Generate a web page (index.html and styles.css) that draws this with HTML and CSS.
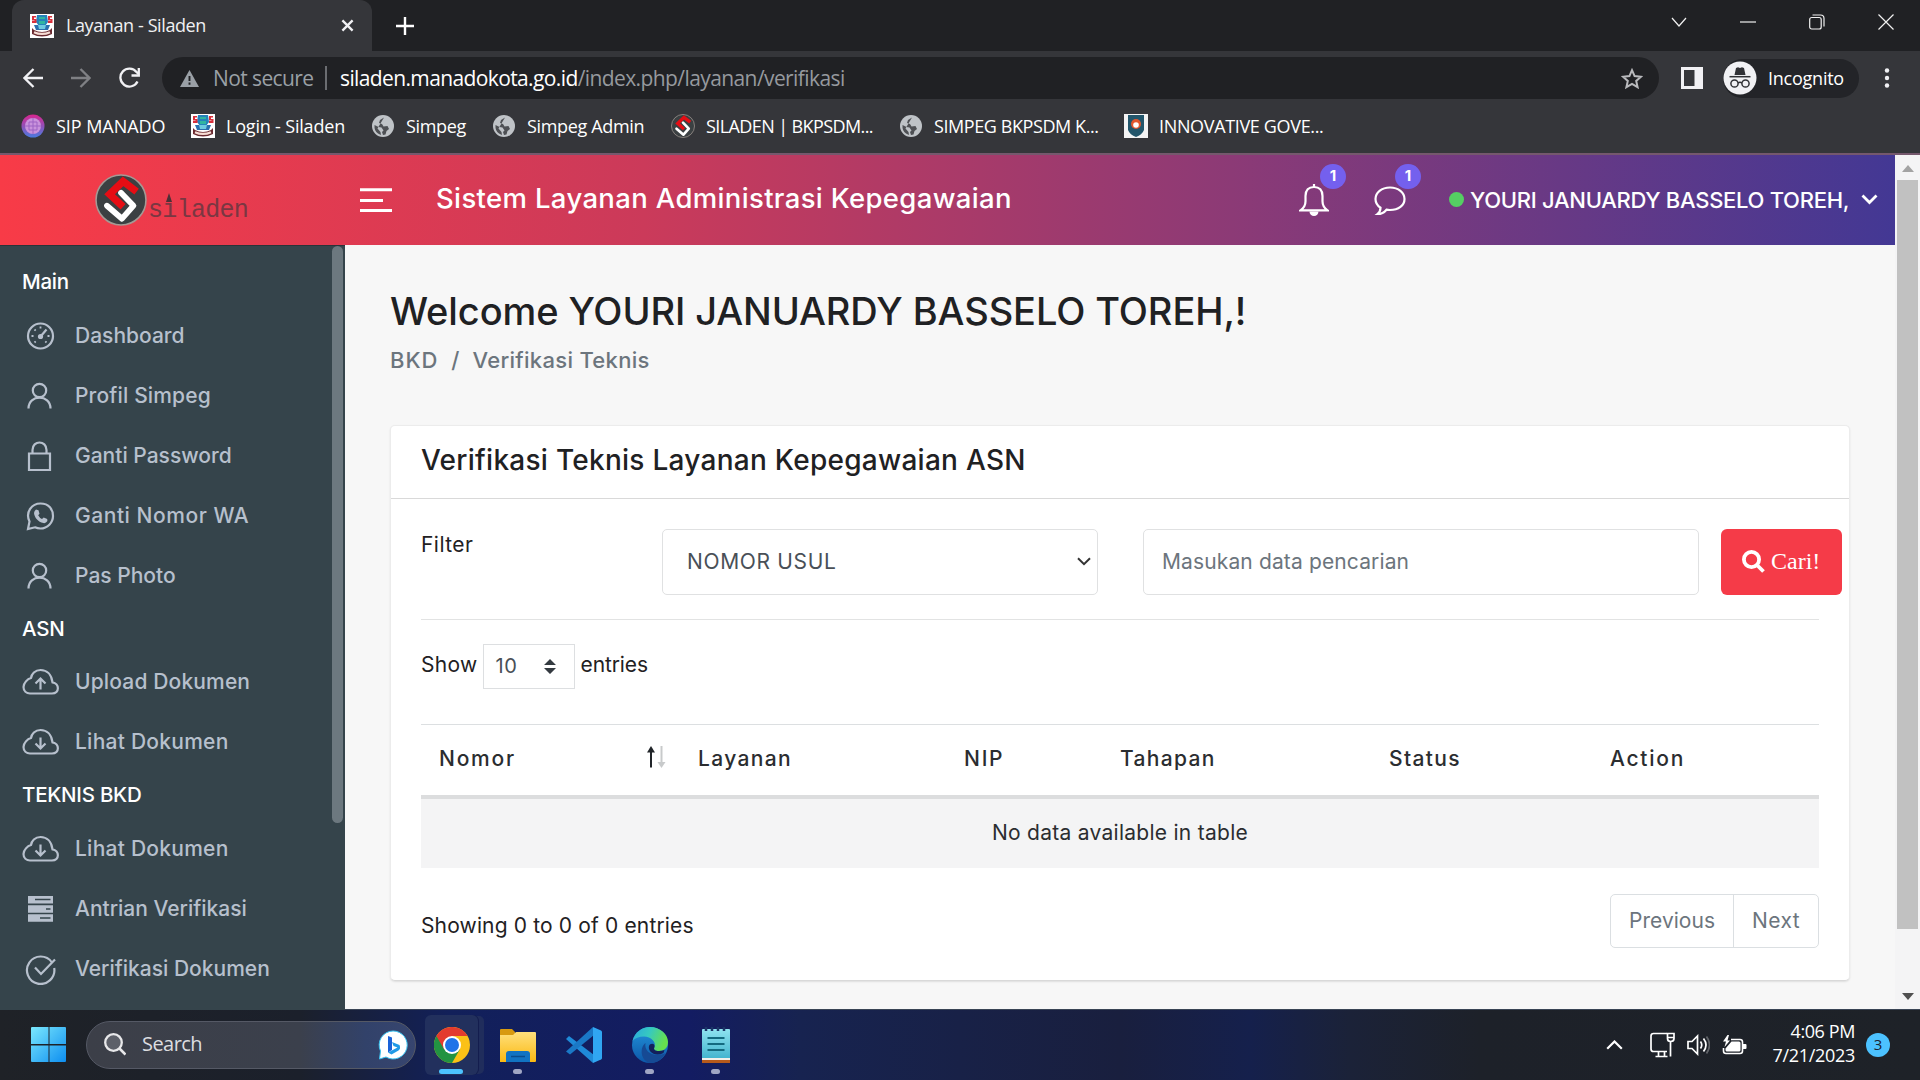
FILE: index.html
```html
<!DOCTYPE html>
<html lang="id">
<head>
<meta charset="utf-8">
<title>Layanan - Siladen</title>
<link rel="stylesheet" href="styles.css">
</head>
<body>
<svg class="defs" width="0" height="0" aria-hidden="true">
  <defs>
    <linearGradient id="win" x1="0" y1="0" x2="1" y2="1"><stop offset="0" stop-color="#7be8fd"/><stop offset="1" stop-color="#0d8ef0"/></linearGradient>
    <linearGradient id="fold" x1="0" y1="0" x2="0" y2="1"><stop offset="0" stop-color="#ffe07c"/><stop offset="1" stop-color="#fbb912"/></linearGradient>
    <linearGradient id="edgeTop" x1="0" y1="0" x2="1" y2=".3"><stop offset="0" stop-color="#2aa7dd"/><stop offset=".5" stop-color="#36c9c0"/><stop offset="1" stop-color="#66e04e"/></linearGradient>
    <linearGradient id="edgeLow" x1="0" y1="0" x2="0" y2="1"><stop offset="0" stop-color="#2395dc"/><stop offset="1" stop-color="#0d57a8"/></linearGradient>
    <linearGradient id="note" x1="0" y1="0" x2="0" y2="1"><stop offset="0" stop-color="#8fe3f0"/><stop offset="1" stop-color="#3fb2cd"/></linearGradient>
    <linearGradient id="sip" x1="0" y1="0" x2="0" y2="1"><stop offset="0" stop-color="#d9258f"/><stop offset="1" stop-color="#4a7be0"/></linearGradient>
    <symbol id="i-manado" viewBox="0 0 24 24"><rect width="24" height="24" fill="#fff"/><path d="M7 1h10l1 7-3 4H9L6 8z" fill="#2583bb"/><path d="M2 2h4v1.500H4V5h2.500v4H2V7h2.500V6.500H2zM18 2h4v1.500h-2V5h2.500v4H18V7h2.500V6.500H18z" fill="#d8303c"/><path d="M9 3h6v2H9zM9 7h6v3H9z" fill="#31b6a0"/><path d="M4 11h16l-2 5H6z" fill="#2a6fae"/><path d="M8 11h8l-1 4H9z" fill="#6fcbe0"/><path d="M2 14l2 2q8 4 16 0l2-2v6q-10 5-20 0z" fill="#6b2a30"/><path d="M4 18.200q8 3.500 16 0" fill="none" stroke="#f6dcd4" stroke-width="2.200"/></symbol>
    <symbol id="i-globe" viewBox="0 0 24 24"><circle cx="12" cy="12" r="11" fill="#bfc3c7"/><path d="M13 3.500l-4 2.500-1 3 3 1 1.500 2.500 4-.5 1.500 3-2.500 2-1 3.500-2.500.5-1-3 1.500-1.500-2-3-3-.5-4-2q-.5 6 3.500 8.500l3 1.500-.5-3-3-3.500" fill="#3a3c40" opacity=".85"/></symbol>
    <symbol id="i-mark" viewBox="0 0 50 50"><circle cx="25" cy="25" r="24" fill="#3b4042" stroke="#a49a95" stroke-width="1.500"/><path d="M40 17L27 7 14 19.500l13 12" fill="none" stroke="#e60d14" stroke-width="7"/><path d="M25 18l12 12.500L26 43 11.500 30.500" fill="none" stroke="#fff" stroke-width="5.500" stroke-linecap="round" stroke-linejoin="round"/></symbol>
    <symbol id="i-user" viewBox="0 0 28 28"><circle cx="12.500" cy="8.500" r="6.700"/><path d="M1.500 26.500c0-14.500 22-14.500 22 0"/></symbol>
    <symbol id="i-cloud" viewBox="0 0 38 28"><path d="M8 25.500h22c8 0 7.500-10 .5-11.200C29.500 6.500 25 2 18.500 2 13 2 9.500 6 9 10 5.500 11 1.500 15 1.500 19s3 6.500 6.500 6.500z"/></symbol>
  </defs>
</svg>

<div class="tabstrip">
  <div class="tab">
    <svg class="fav"><use href="#i-manado"/></svg>
    <span class="tab-title">Layanan - Siladen</span>
    <svg class="tab-x" width="13" height="13" viewBox="0 0 14 14"><path d="M1.500 1.500l11 11m0-11l-11 11"/></svg>
  </div>
  <svg class="newtab" width="18" height="18" viewBox="0 0 18 18"><path d="M9 0v18M0 9h18"/></svg>
  <div class="wincontrols">
    <svg width="16" height="16" viewBox="0 0 16 16"><path d="M1 4l7 8 7-8"/></svg>
    <svg width="16" height="16" viewBox="0 0 16 16"><path d="M0 8h16"/></svg>
    <svg width="16" height="16" viewBox="0 0 16 16"><rect x=".7" y="3.500" width="11.500" height="11.500" rx="2"/><path d="M3.500 1h8q3.500 0 3.500 3.500v8"/></svg>
    <svg width="16" height="16" viewBox="0 0 16 16"><path d="M.5.5l15 15m0-15l-15 15"/></svg>
  </div>
</div>

<div class="toolbar">
  <div class="navs">
    <svg width="20" height="20" viewBox="0 0 20 20"><path d="M20 10H2M10.500 1L1.500 10l9 9"/></svg>
    <svg class="dim" width="20" height="20" viewBox="0 0 20 20"><path d="M0 10h18M9.500 1l9 9-9 9"/></svg>
    <svg width="22" height="22" viewBox="0 0 22 22"><path d="M18.500 14.500A9 9 0 1 1 17.500 5l1.500 1.500M19.800 1v7.500H12.500"/></svg>
  </div>
  <div class="omnibox">
    <svg width="19" height="17" viewBox="0 0 19 17"><path d="M9.500 0L19 17H0z" fill="#9aa0a6"/><path d="M9.500 6v5m0 1.500v2.300" stroke="#202124" stroke-width="1.900"/></svg>
    <span class="insecure">Not secure</span>
    <span class="bar"></span>
    <span class="host">siladen.manadokota.go.id</span><span class="path">/index.php/layanan/verifikasi</span>
    <svg class="star" width="22" height="21" viewBox="0 0 22 21"><path d="M11 2.200l2.600 5.900 6.400.6-4.800 4.200 1.400 6.300L11 15.900l-5.600 3.300 1.400-6.300L2 8.700l6.400-.6z"/></svg>
  </div>
  <svg class="panel" width="22" height="22" viewBox="0 0 22 22"><path d="M0 0h22v22H0zM3 3v16h10.500V3z" fill="#f1f1f4" fill-rule="evenodd"/></svg>
  <div class="incog">
    <svg width="34" height="34" viewBox="0 0 34 34"><circle cx="17" cy="17" r="16.500" fill="#f1f1f4"/><path d="M11.500 14l1.500-7 2-.7 2 .7 2-.7 2 .7 1.500 7z" fill="#303135"/><path d="M6.500 15.700h21" stroke="#303135" stroke-width="1.500"/><g fill="none" stroke="#303135" stroke-width="1.500"><circle cx="11.500" cy="22.500" r="3.600"/><circle cx="22.500" cy="22.500" r="3.600"/><path d="M15 22q2-1.500 4 0"/></g></svg>
    <span>Incognito</span>
  </div>
  <svg class="dots" width="6" height="20" viewBox="0 0 6 20"><circle cx="3" cy="2.500" r="2.200"/><circle cx="3" cy="10" r="2.200"/><circle cx="3" cy="17.500" r="2.200"/></svg>
</div>

<div class="bookmarks">
  <div class="bm"><svg viewBox="0 0 24 24"><circle cx="12" cy="12" r="11.500" fill="url(#sip)"/><circle cx="12" cy="12" r="8" fill="#c992dc"/><path d="M8 8h8v8H8zM12 4v16M4 12h16" fill="none" stroke="#9d62c4"/></svg><span class="n1">SIP MANADO</span></div>
  <div class="bm"><svg><use href="#i-manado"/></svg><span class="n2">Login - Siladen</span></div>
  <div class="bm"><svg><use href="#i-globe"/></svg><span class="n3">Simpeg</span></div>
  <div class="bm"><svg><use href="#i-globe"/></svg><span class="n3">Simpeg Admin</span></div>
  <div class="bm"><svg><use href="#i-mark"/></svg><span class="n4">SILADEN | BKPSDM...</span></div>
  <div class="bm"><svg><use href="#i-globe"/></svg><span class="n5">SIMPEG BKPSDM K...</span></div>
  <div class="bm"><svg viewBox="0 0 24 24"><rect width="24" height="24" fill="#f4f4f4"/><path d="M4 1h16v15q-2 5-8 7-6-2-8-7z" fill="#23566b"/><circle cx="12" cy="10" r="5" fill="#e2572e"/><circle cx="12" cy="11" r="2.800" fill="#fff"/></svg><span class="n3">INNOVATIVE GOVE...</span></div>
</div>

<div class="viewport">
  <div class="app">
    <header class="topbar">
      <div class="logo"><svg width="52" height="52"><use href="#i-mark"/></svg><span class="logo-text">s<span class="logo-i">ı</span>laden</span></div>
      <svg class="burger" width="32" height="24" viewBox="0 0 32 24"><path d="M0 1.800h32M0 12.500h23M0 22.500h32"/></svg>
      <h1>Sistem Layanan Administrasi Kepegawaian</h1>
      <div class="bell">
        <svg width="30" height="32" viewBox="0 0 30 32"><path d="M1.500 26.300h27q-5-3.300-5-9V12C23.500 6 20.500 3 15 3S6.500 6 6.500 12v5.300q0 5.700-5 9z"/><path d="M15 0v3"/><path d="M10.500 27.500a4.500 4.500 0 0 0 9 0z" fill="#fff" stroke="none"/></svg>
        <span class="badge">1</span>
      </div>
      <div class="chat">
        <svg width="32" height="32" viewBox="0 0 32 32"><path d="M16 3.500c8.500 0 14.500 5 14.500 11.500S24.500 26 16 26q-2 0-3.500-.3Q9 30 3.500 30q3-2.500 3-6.300Q1.500 20.500 1.500 15C1.500 8.500 7.500 3.500 16 3.500z"/></svg>
        <span class="badge">1</span>
      </div>
      <div class="account"><i class="online"></i><span>YOURI JANUARDY BASSELO TOREH,</span><svg width="17" height="11" viewBox="0 0 17 11"><path d="M1.500 1.500l7 7 7-7"/></svg></div>
    </header>
    <div class="cols">
      <nav class="sidebar">
        <h2>Main</h2>
        <a><svg width="38" height="30" viewBox="-5 0 38 30"><circle cx="13.500" cy="15" r="12.500"/><circle cx="13.500" cy="15.500" r="2.600" fill="#b7c0cd" stroke="none"/><path d="M14 15l5.500-6.500"/><path d="M13.500 5.500v2M4.500 15h2M20.500 15h2M7.500 8.500l1.200 1.200M7.500 21.500l1.200-1.200M19.500 21.500l-1.200-1.200" stroke-width="1.800"/></svg><span class="t1">Dashboard</span></a>
        <a><svg width="38" height="28" viewBox="-5 0 38 28"><use href="#i-user" width="28" height="28"/></svg><span class="t3">Profil Simpeg</span></a>
        <a><svg width="38" height="30" viewBox="-5 0 38 30"><path d="M2 12.500h21V29H2zM5.500 12.500V9c0-10 14-10 14 0v3.500"/></svg><span class="t1">Ganti Password</span></a>
        <a><svg width="38" height="30" viewBox="-5 0 38 30"><path d="M1 28l1.500-7.500C-2 11 5 2.500 13.500 2.500S26 8.500 26 15 20.500 27.500 13.500 27.500q-3 0-5.500-1.200z"/><path d="M9 8.500l2.500.8 1 3.400-1.300 1.600q1.300 2.600 3.800 3.800l1.700-1.500 3.500 1.500.2 2q-1.500 2.500-4 2C11 21 7.500 16.500 7 12q.3-2.500 2-3.500z" fill="#b7c0cd" stroke="none"/></svg><span class="t2">Ganti Nomor WA</span></a>
        <a><svg width="38" height="28" viewBox="-5 0 38 28"><use href="#i-user" width="28" height="28"/></svg><span>Pas Photo</span></a>
        <h2>ASN</h2>
        <a><svg width="38" height="28" viewBox="0 0 38 28"><use href="#i-cloud"/><path d="M18.500 21.500V11M13.500 15.500l5-5 5 5"/></svg><span class="t3">Upload Dokumen</span></a>
        <a><svg width="38" height="28" viewBox="0 0 38 28"><use href="#i-cloud"/><path d="M18.500 9.500V20M13.500 15.500l5 5 5-5"/></svg><span class="t4">Lihat Dokumen</span></a>
        <h2>TEKNIS BKD</h2>
        <a><svg width="38" height="28" viewBox="0 0 38 28"><use href="#i-cloud"/><path d="M18.500 9.500V20M13.500 15.500l5 5 5-5"/></svg><span class="t4">Lihat Dokumen</span></a>
        <a><svg width="38" height="26" viewBox="-5 0 38 26"><path d="M1 0h25v7.500H1zM1 9.200h25v7.500H1zM1 18.300h25v7.500H1z" fill="#b7c0cd" stroke="none"/><path d="M8 3.500h15.500M19 13h4.500M13 22h10.500" stroke="#35444b" stroke-width="1.700"/></svg><span>Antrian Verifikasi</span></a>
        <a><svg width="38" height="32" viewBox="-5 0 38 32"><path d="M25 9.500A13.700 13.700 0 1 0 27.200 15M8 14.500l6 6.500L28 6.500"/></svg><span>Verifikasi Dokumen</span></a>
        <div class="side-scroll"></div>
      </nav>
      <main>
        <h3>Welcome YOURI JANUARDY BASSELO TOREH,!</h3>
        <div class="crumbs"><span class="c1">BKD</span><span>/</span><span class="c2">Verifikasi Teknis</span></div>
        <section class="card">
          <h4>Verifikasi Teknis Layanan Kepegawaian ASN</h4>
          <div class="card-body">
            <div class="filter">
              <label>Filter</label>
              <div class="select"><span>NOMOR USUL</span><svg width="14" height="9" viewBox="0 0 14 9"><path d="M1 1.200l6 6 6-6"/></svg></div>
              <div class="input">Masukan data pencarian</div>
              <button class="search-btn"><svg width="23" height="23" viewBox="0 0 23 23"><circle cx="9.500" cy="9.500" r="7.600"/><path d="M15 15l6.500 6.500"/></svg><span>Cari!</span></button>
            </div>
            <div class="length"><span>Show</span><div class="len-select"><span>10</span><svg width="12" height="15" viewBox="0 0 12 15"><path d="M6 0l6 6H0zM6 15L0 9h12z"/></svg></div><span class="ent">entries</span></div>
            <div class="table">
              <div class="thead"><div class="wide">Nomor<svg width="20" height="22" viewBox="0 0 20 22"><path d="M5 21.500V4" stroke="#212529" stroke-width="2"/><path d="M5 0l4 6.500H1z" fill="#212529"/><path d="M15.500 0v17" stroke="#c8cacb" stroke-width="2"/><path d="M15.500 22l4-6h-8z" fill="#c8cacb"/></svg></div><div>Layanan</div><div class="wide">NIP</div><div>Tahapan</div><div>Status</div><div class="wide">Action</div></div>
              <div class="empty">No data available in table</div>
            </div>
            <div class="tfoot"><span>Showing 0 to 0 of 0 entries</span><div class="pager"><span>Previous</span><span class="nx">Next</span></div></div>
          </div>
        </section>
      </main>
    </div>
  </div>
  <div class="vscroll"><svg width="12" height="8" viewBox="0 0 12 8"><path d="M6 0l6 7H0z" fill="#a3a3a3"/></svg><div class="thumb"></div><svg class="down" width="12" height="8" viewBox="0 0 12 8"><path d="M6 7l6-7H0z" fill="#505050"/></svg></div>
</div>

<div class="taskbar">
  <svg class="start" width="36" height="36" viewBox="0 0 36 36"><path d="M1 0h16.500v17H0V1q0-1 1-1zM18.500 0H34q1 0 1 1v16H18.500zM0 18.500h17.500V35H1q-1 0-1-1zM18.500 18.500H35V34q0 1-1 1H18.500z" fill="url(#win)"/></svg>
  <div class="searchbox">
    <svg width="22" height="23" viewBox="0 0 22 23"><circle cx="9.500" cy="9.500" r="8.300" fill="#5d6069" stroke="#e8e8ea" stroke-width="2.300"/><path d="M15.500 15.500l6 6" stroke="#e8e8ea" stroke-width="2.600"/></svg>
    <span>Search</span>
    <svg class="bing" width="30" height="30" viewBox="0 0 30 30"><path d="M15 1a14 14 0 1 1-7 26l-6.500 2 1-8A14 14 0 0 1 15 1z" fill="#fff" stroke="#36c3f2" stroke-width="1"/><path d="M10 6l4 1.500V20l-4 2.500z" fill="#1a62d8"/><path d="M10 22.500l9.500-5-4-1.500-1.500-4 7.500 3q1.500 4-1 5.500l-7 4z" fill="#1f9ae6"/></svg>
  </div>
  <div class="tasks">
    <div class="task active"><svg viewBox="0 0 36 36"><circle cx="18" cy="18" r="18" fill="#fbc116"/><path d="M18 18L2.400 9A18 18 0 0 0 18 36L25.800 22.500z" fill="#229342"/><path d="M18 9h15.600A18 18 0 0 0 2.400 9l7.800 13.500z" fill="#e33b2e"/><circle cx="18" cy="18" r="9" fill="#fff"/><circle cx="18" cy="18" r="7" fill="#1f73e8"/></svg></div>
    <div class="task run"><svg viewBox="0 0 36 36"><path d="M0 3q0-1 1-1h11l3 3v6H0z" fill="#d89a10"/><path d="M0 8h13l3-3h19q1 0 1 1v28q0 1-1 1H0z" fill="url(#fold)"/><path d="M6 35V27q0-3 3-3h18q3 0 3 3v8z" fill="#1173c2"/><path d="M11 29.500h14" stroke="#0a4c8c" stroke-width="1.500"/></svg></div>
    <div class="task"><svg viewBox="0 0 36 36"><path d="M0 12l3-3L28 28l-1 8z" fill="#1f8ad8"/><path d="M0 24.500l4 3L28 8l-1-8z" fill="#1a78c6"/><path d="M27 0l8 3.500q1 .5 1 1.500v26q0 1-1 1.500L27 36z" fill="#30a6f2"/></svg></div>
    <div class="task run"><svg viewBox="0 0 36 36"><circle cx="18" cy="18" r="18" fill="url(#edgeLow)"/><path d="M0.500 14C3 5 10 0 18 0c10 0 18 7 18 15 0 6-4 9-9 9-4 0-6-1.500-4.500-4C24.500 15 19 9.500 12 9.500 7 9.500 3 11 .5 14z" fill="url(#edgeTop)"/><path d="M13.500 16c-1.500 7 4.500 12 11.500 12 4 0 6-.5 8.500-2C30 33 24 36 18 36 9 34 7 21 13.500 16z" fill="#164a94"/><path d="M22.500 20c-1.500 2.500.5 4 4.500 4q3 0 5.500-1l-1 3q-3 1.500-6 1.500c-6 0-9.500-4.500-8.500-8.500 1-3.500 6.500-3 5.500 1z" fill="#13205c"/></svg></div>
    <div class="task run"><svg viewBox="0 0 36 36"><path d="M4 3q0-1 1-1h26q1 0 1 1v30H4z" fill="url(#note)"/><path d="M4 31h28v2H4z" fill="#f1efe9"/><path d="M4 33h28v3H4z" fill="#b65a1b"/><path d="M9.500 11h17M9.500 17h17M9.500 23h17" stroke="#136a80" stroke-width="2"/><path d="M8 0v4m6-4v4m6-4v4m6-4v4" stroke="#1b3566" stroke-width="2.500"/></svg></div>
  </div>
  <div class="tray">
    <svg class="up" width="17" height="10" viewBox="0 0 17 10"><path d="M1.200 8.800l7.300-7.300 7.300 7.300"/></svg>
    <svg width="25" height="26" viewBox="0 0 25 26"><path d="M17 1.500H3.500q-2.500 0-2.500 2.500v13q0 2.500 2.500 2.500H17M5.500 24.500h12M8.500 20v4M14.500 20v4M20.500 9.500v15"/><path d="M17.500 1.500h6.500v5q0 3-3.300 3-3.200 0-3.200-3zM17.500 5.500H24"/></svg>
    <svg class="spk" width="23" height="22" viewBox="0 0 23 22"><path d="M1 7.500h4L10.500 2v18L5 14.500H1zM13.500 7.500q2.500 3.500 0 7M16.500 4.500q5 6.500 0 13"/><path d="M19.500 2.500q6 8.500 0 17" opacity=".3"/></svg>
    <svg class="bat" width="25" height="20" viewBox="0 0 25 20"><path d="M9 4.500h9q2.500 0 2.500 2.500v9q0 2.500-2.500 2.500H4q-2.500 0-2.500-2.500v-3" stroke-width="1.600"/><path d="M9.500 6.500h7.500q1.500 0 1.500 1.500v7q0 1.500-1.500 1.500H5q-1.500 0-1.500-1.500v-1.500zM21 9h2.500q1 0 1 1v3q0 1-1 1H21zM5.500 0L1 6.500h3L2.500 12 8 5.500H5.500L7 0z" fill="#fff" stroke="none"/></svg>
    <div class="clock"><div>4:06 PM</div><div class="date">7/21/2023</div></div>
    <span class="count">3</span>
  </div>
</div>
</body>
</html>
```
FILE: styles.css
```css
* { box-sizing: border-box; }
body { margin: 0; width: 1920px; height: 1080px; overflow: hidden; display: flex; flex-direction: column; font-family: "Inter", "Liberation Sans", sans-serif; font-size: 21px; color: #1f2123; background: #35363a; }
h1, h2, h3, h4 { margin: 0; font-weight: 500; white-space: nowrap; }
svg { display: block; flex: none; fill: none; }
span { white-space: nowrap; }
.defs { position: absolute; }

/* browser frame */
.tabstrip, .toolbar, .bookmarks, .taskbar { font-family: "Open Sans", "Noto Sans", sans-serif; color: #fff; font-size: 18px; flex: none; }
.tabstrip { height: 51px; background: #202124; display: flex; align-items: center; padding-left: 12px; }
.tab { width: 360px; height: 51px; background: #35363a; border-radius: 12px 12px 0 0; display: flex; align-items: center; padding: 0 18px; }
.fav { width: 24px; height: 24px; }
.tab-title { margin: -2px 0 0 12px; letter-spacing: -.4px; color: #f0f0f2; }
.tab-x { margin-left: auto; stroke: #f1f1f4; stroke-width: 2.500; }
.newtab { margin-left: 24px; stroke: #fff; stroke-width: 2.4; }
.wincontrols { margin: -8px 26px 0 auto; display: flex; gap: 53px; stroke: #f1f1f1; stroke-width: 1.200; }
.toolbar { height: 54px; display: flex; align-items: center; background: #35363a; }
.navs { width: 162px; padding-left: 23px; display: flex; align-items: center; gap: 28px; stroke: #f1f1f4; stroke-width: 2.3; }
.dim { stroke: #7f8084; }
.omnibox { width: 1497px; height: 42px; border-radius: 21px; background: #202124; display: flex; align-items: center; padding: 0 16px 0 18px; font-size: 21px; }
.insecure { margin-left: 14px; color: #9aa0a6; letter-spacing: -.6px; width: 101px; }
.bar { width: 2px; height: 24px; margin: 0 13px 0 11px; background: #6b6d71; }
.host { letter-spacing: -.62px; }
.path { letter-spacing: -.59px; color: #96999e; }
.star { margin-left: auto; stroke: #b9babd; stroke-width: 2; }
.panel { margin-left: 22px; }
.incog { margin-left: 20px; width: 136px; height: 39px; border-radius: 20px; background: #232428; display: flex; align-items: center; padding-left: 0; gap: 11px; letter-spacing: -.24px; }
.dots { margin-left: 25px; fill: #f1f1f4; }
.bookmarks { height: 48px; padding: 0 0 6px 21px; display: grid; grid-template-columns: 170px 180px 121px 179px 228px 225px auto; align-items: center; background: #35363a; }
.bm { display: flex; align-items: center; gap: 11px; }
.bm svg { width: 24px; height: 24px; }
.bm span { margin-top: -1px; }
.n1 { letter-spacing: -.05px; }
.n2 { letter-spacing: -.19px; }
.n3 { letter-spacing: -.34px; }
.n4 { letter-spacing: -.6px; }
.n5 { letter-spacing: -.42px; }

/* page viewport */
.viewport { height: 856px; flex: none; display: flex; border-top: 2px solid #75586d; background: #f7f7f7; }
.app { width: 1895px; }
.vscroll { width: 25px; background: #f4f4f5; display: flex; flex-direction: column; align-items: center; padding: 10px 0 8px; }
.thumb { width: 21px; height: 749px; background: #c1c1c1; margin-top: 7px; }
.down { margin-top: auto; }
.topbar { height: 90px; background: linear-gradient(90deg, #f83b47, #cb3a5a 34%, #8c3a76 65%, #433894); color: #fff; display: flex; align-items: center; }
.logo { width: 360px; padding-left: 95px; display: flex; align-items: center; }
.logo-text { font: 25px/30px "Liberation Mono", monospace; letter-spacing: -.7px; color: #7a3742; margin: 22px 0 0 1px; }
.logo-i { position: relative; }
.logo-i::before { content: ""; position: absolute; left: 4px; top: -3px; border: 3.500px solid transparent; border-bottom: 9px solid #4d3036; border-top: 0; }
.burger { stroke: #fff; stroke-width: 3; }
.topbar h1 { margin: -5px 0 0 44px; width: 863px; font-size: 27.500px; letter-spacing: .35px; }
.bell, .chat { position: relative; width: 75px; stroke: #fff; stroke-width: 2.200; }
.badge { position: absolute; left: 21px; top: -20px; width: 26px; height: 25px; border-radius: 13px; background: #7460ee; font-size: 15px; font-weight: 700; line-height: 24px; text-align: center; stroke: none; }
.account { display: flex; align-items: center; margin-top: -1px; font-size: 22px; font-weight: 500; letter-spacing: -.29px; }
.online { width: 15px; height: 15px; border-radius: 50%; background: #55ce63; margin-right: 6px; }
.account svg { margin-left: 12px; stroke: #fff; stroke-width: 2.800; }
.cols { display: flex; height: 764px; }

/* sidebar */
.sidebar { position: relative; width: 345px; height: 765px; background: #35444b; padding-top: 13px; font-weight: 500; color: #b7c0cd; border-top: 1px solid #2b3339; }
.sidebar h2 { height: 46.500px; padding-left: 22px; line-height: 46px; font-size: 20.500px; letter-spacing: -.25px; color: #fff; }
.sidebar a { height: 60px; display: flex; align-items: center; padding-left: 22px; gap: 15px; line-height: 58px; }
.sidebar a svg { stroke: #b7c0cd; stroke-width: 2.200; }
.t1 { letter-spacing: 0; }
.t2 { letter-spacing: .55px; }
.t3 { letter-spacing: .15px; }
.t4 { letter-spacing: .25px; }
.side-scroll { position: absolute; left: 332px; top: 0; width: 11px; height: 577px; border-radius: 6px; background: #6c787f; }

/* content */
main { width: 1550px; padding: 43px 45px 0; }
main h3 { font-size: 38px; line-height: 46px; letter-spacing: -.1px; }
.crumbs { display: flex; gap: 13px; margin-top: 11px; font-size: 22px; line-height: 30px; font-weight: 500; color: #6c757d; }
.c1 { letter-spacing: .95px; }
.c2 { letter-spacing: .3px; }
.card { margin-top: 50px; height: 556px; background: #fff; border: 1px solid #ececec; border-bottom-color: #d9d9d9; border-radius: 5px; box-shadow: 0 1px 2px rgba(0,0,0,.1); }
.card h4 { height: 73px; padding: 0 30px; border-bottom: 1px solid #d9d9d9; font-size: 28px; line-height: 69px; letter-spacing: .27px; }
.card-body { padding: 30px 30px 0; }
.filter { display: grid; grid-template-columns: 241px 436px 556px 121px; height: 91px; border-bottom: 1px solid #e2e3e3; }
.filter label { line-height: 32px; letter-spacing: .45px; }
.select, .input { height: 66px; border: 1px solid #e0e1e2; border-radius: 5px; display: flex; align-items: center; }
.select { padding: 0 6px 2px 24px; justify-content: space-between; color: #495057; letter-spacing: .65px; }
.select svg { stroke: #333; stroke-width: 2; }
.input { margin-left: 45px; width: 556px; padding: 0 18px 2px; color: #6c757d; letter-spacing: .13px; }
.search-btn { margin-left: 67px; width: 121px; height: 66px; border: 0; border-radius: 6px; background: #f53b48; color: #fff; display: flex; align-items: center; padding: 0 0 2px 21px; gap: 6px; font: 24px "Liberation Serif", serif; }
.search-btn svg { stroke: #fff; stroke-width: 3.800; }
.length { display: flex; height: 45px; margin-top: 24px; line-height: 41px; letter-spacing: .3px; }
.len-select { width: 92px; height: 45px; margin: 0 6px 0 5px; border: 1px solid #dddfe1; display: flex; align-items: center; justify-content: space-between; padding: 0 18px 0 12px; font-size: 20px; letter-spacing: .6px; color: #495057; }
.len-select svg { fill: #343a40; }
.ent { letter-spacing: -.1px; }
.table { margin-top: 35px; border-top: 1px solid #dcdfe1; }
.thead { display: grid; grid-template-columns: 259px 266px 156px 269px 221px auto; height: 74px; border-bottom: 4px solid #dcddde; font-weight: 500; line-height: 68px; letter-spacing: 1.350px; color: #2b2d30; }
.thead .wide { letter-spacing: 1.750px; }
.thead div { padding-left: 18px; display: flex; justify-content: space-between; }
.thead svg { margin: 21px 14px 0 0; }
.empty { height: 69px; background: #f4f4f5; text-align: center; line-height: 67px; letter-spacing: .27px; color: #2b2d30; }
.tfoot { display: flex; justify-content: space-between; margin-top: 26px; line-height: 63px; letter-spacing: .15px; }
.pager { display: flex; height: 54px; border: 1px solid #dbdfe2; border-radius: 5px; color: #6c757d; line-height: 51px; }
.pager span { width: 122px; text-align: center; letter-spacing: .03px; }
.pager .nx { width: 85px; border-left: 1px solid #dbdfe2; letter-spacing: .4px; }

/* taskbar */
.taskbar { height: 71px; display: flex; align-items: center; padding-bottom: 1px; border-top: 1px solid #3a4555; background: linear-gradient(90deg, #1f2227 0, #1b202b 300px, #12205a 450px, #131c62 690px, #172350 800px, #191f3e 1120px, #15204c 1250px, #1b2238 1350px, #1d2129 1480px, #1e2228 1920px); }
.start { margin-left: 31px; }
.searchbox { margin-left: 19px; width: 330px; height: 48px; border-radius: 24px; background: linear-gradient(90deg, #3c3f48 0, #3b404c 65%, #32426a 85%, #37456f); border: 1px solid #555965; display: flex; align-items: center; padding: 0 7px 0 17px; font-size: 20px; color: #dcdde0; }
.searchbox span { margin: -2px 0 0 16px; letter-spacing: -.55px; }
.bing { margin-left: auto; }
.tasks { display: flex; gap: 13px; margin-left: 9px; }
.task { position: relative; width: 53px; height: 60px; display: flex; align-items: center; justify-content: center; }
.task svg { width: 36px; height: 36px; }
.task.active { background: linear-gradient(90deg, transparent 0 2px, #253464 2px); background: #22305d; border-radius: 6px; box-shadow: 1px 0 0 #131d4e, 7px 0 0 -1px #202d5c; }
.task.active::after, .task.run::after { content: ""; position: absolute; left: 22px; bottom: 1px; width: 9px; height: 5px; border-radius: 3px; background: #a0a6c4; }
.task.active::after { left: 14px; width: 24px; background: #4cc2ff; }
.tray { margin-left: auto; margin-right: 30px; display: flex; align-items: center; stroke: #fff; stroke-width: 1.700; }
.up { margin-right: 27px; stroke-width: 2.200; }
.spk { margin-left: 12px; }
.bat { margin-left: 12px; }
.clock { stroke: none; width: 108px; margin-top: -3px; text-align: right; line-height: 24px; letter-spacing: -.4px; }
.date { letter-spacing: -.3px; }
.count { width: 24px; height: 24px; margin-left: 11px; border-radius: 50%; background: #4cc2ff; color: #1b2430; font-size: 15px; line-height: 23px; text-align: center; }
```
